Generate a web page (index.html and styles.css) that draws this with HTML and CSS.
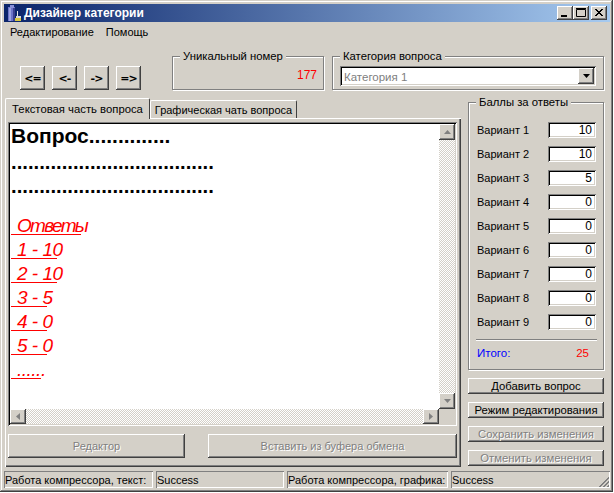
FILE: index.html
```html
<!DOCTYPE html>
<html lang="ru">
<head>
<meta charset="utf-8">
<title>Дизайнер категории</title>
<link rel="stylesheet" href="styles.css">
</head>
<body>
<div class="window">
  <div class="titlebar">
    <svg class="appicon" width="16" height="16" viewBox="0 0 16 16"><rect x="2" y="2" width="7" height="14" fill="#6c74c8"/><rect x="4" y="0" width="4" height="3" fill="#8890d8"/><rect x="3" y="3" width="2" height="13" fill="#9aa2e0"/><rect x="7" y="3" width="2" height="13" fill="#3a3f90"/><rect x="11" y="6" width="1" height="6" fill="#e8e8e8"/><rect x="10" y="11" width="5" height="2" fill="#d8d8d8"/><rect x="9" y="13" width="6" height="3" fill="#d8c840"/></svg>
    <span class="title-text">Дизайнер категории</span>
    <div class="winbtns">
      <div class="winbtn"><svg width="16" height="14" viewBox="0 0 16 14"><rect x="4" y="9" width="6" height="2" fill="#000"/></svg></div>
      <div class="winbtn"><svg width="16" height="14" viewBox="0 0 16 14"><path d="M3.500 3.500h9v7h-9z" fill="none" stroke="#000"/><path d="M3 2.500h10" stroke="#000"/></svg></div>
      <div class="winbtn winbtn-close"><svg width="16" height="14" viewBox="0 0 16 14"><path d="M4 3l7 7M5 3l7 7M11 3l-7 7M12 3l-7 7" stroke="#000" fill="none"/></svg></div>
    </div>
  </div>
  <div class="menu"><span>Редактирование</span><span>Помощь</span></div>
  <div class="top">
    <div class="nav">
      <div class="btn navbtn">&lt;=</div>
      <div class="btn navbtn">&lt;-</div>
      <div class="btn navbtn">-&gt;</div>
      <div class="btn navbtn">=&gt;</div>
    </div>
    <div class="group group-id">
      <div class="legend">Уникальный номер</div>
      <div class="id-value">177</div>
    </div>
    <div class="group group-cat">
      <div class="legend">Категория вопроса</div>
      <div class="combo">
        <span class="combo-text">Категория 1</span>
        <div class="btn combo-btn"><svg width="7" height="4" viewBox="0 0 7 4"><path d="M0 0h7L3.500 4z" fill="#000"/></svg></div>
      </div>
    </div>
  </div>
  <div class="main">
    <div class="left">
      <div class="tabs">
        <div class="tab tab-active">Текстовая часть вопроса</div>
        <div class="tab">Графическая чать вопроса</div>
      </div>
      <div class="panel">
        <div class="memo">
          <div class="memo-text">
            <div class="q-title">Вопрос..............</div>
            <div class="q-dots">....................................</div>
            <div class="q-dots">....................................</div>
            <div class="ans ans-first ans-w70">Ответы</div>
            <div class="ans ans-w46">1 - 10</div>
            <div class="ans ans-w46">2 - 10</div>
            <div class="ans ans-w36">3 - 5</div>
            <div class="ans ans-w36">4 - 0</div>
            <div class="ans ans-w36">5 - 0</div>
            <div class="ans ans-w30">......</div>
          </div>
          <div class="vscroll">
            <div class="sbtn"><svg width="7" height="4" viewBox="0 0 7 4"><path d="M3.500 0L7 4H0z" fill="#808080"/></svg></div>
            <div class="strack"></div>
            <div class="sbtn"><svg width="7" height="4" viewBox="0 0 7 4"><path d="M0 0h7L3.500 4z" fill="#808080"/></svg></div>
          </div>
          <div class="hscroll">
            <div class="sbtn"><svg width="4" height="7" viewBox="0 0 4 7"><path d="M4 0v7L0 3.500z" fill="#808080"/></svg></div>
            <div class="strack"></div>
            <div class="sbtn"><svg width="4" height="7" viewBox="0 0 4 7"><path d="M0 0v7L4 3.500z" fill="#808080"/></svg></div>
          </div>
          <div class="corner"></div>
        </div>
        <div class="memo-btns">
          <div class="btn disabled btn-editor">Редактор</div>
          <div class="btn disabled btn-paste">Вставить из буфера обмена</div>
        </div>
      </div>
    </div>
    <div class="right">
      <div class="group group-score">
        <div class="legend">Баллы за ответы</div>
        <div class="rows">
          <div class="row"><span>Вариант 1</span><div class="num">10</div></div>
          <div class="row"><span>Вариант 2</span><div class="num">10</div></div>
          <div class="row"><span>Вариант 3</span><div class="num">5</div></div>
          <div class="row"><span>Вариант 4</span><div class="num">0</div></div>
          <div class="row"><span>Вариант 5</span><div class="num">0</div></div>
          <div class="row"><span>Вариант 6</span><div class="num">0</div></div>
          <div class="row"><span>Вариант 7</span><div class="num">0</div></div>
          <div class="row"><span>Вариант 8</span><div class="num">0</div></div>
          <div class="row"><span>Вариант 9</span><div class="num">0</div></div>
        </div>
        <div class="sep"></div>
        <div class="total"><span class="total-label">Итого:</span><span class="total-value">25</span></div>
      </div>
      <div class="btn action">Добавить вопрос</div>
      <div class="btn action">Режим редактирования</div>
      <div class="btn action disabled">Сохранить изменения</div>
      <div class="btn action disabled">Отменить изменения</div>
    </div>
  </div>
  <div class="status">
    <div class="cell cell-1">Работа компрессора, текст:</div>
    <div class="cell cell-2">Success</div>
    <div class="cell cell-3">Работа компрессора, графика:</div>
    <div class="cell cell-4">Success<svg class="grip" width="12" height="12" viewBox="0 0 12 12"><path d="M11 1L1 11M11 5L5 11M11 9L9 11" stroke="#808080" fill="none"/><path d="M11 2L2 11M11 6L6 11M11 10L10 11" stroke="#808080" fill="none"/></svg></div>
  </div>
</div>
</body>
</html>
```

FILE: styles.css
```css
* { box-sizing: border-box; }
html, body { margin: 0; padding: 0; }
body {
  width: 614px;
  height: 493px;
  background: #fff;
  font-family: "Liberation Sans", Arial, sans-serif;
  font-size: 11px;
  color: #000;
  overflow: hidden;
}
.window {
  width: 613px;
  height: 492px;
  padding: 4px 3px 4px 4px;
  display: flex;
  flex-direction: column;
  background: #d4d0c8;
  box-shadow: inset -1px -1px #404040, inset 1px 1px #d4d0c8, inset -2px -2px #808080, inset 2px 2px #fff;
}
.titlebar {
  height: 18px;
  flex: none;
  display: flex;
  align-items: center;
  background: linear-gradient(90deg, #0a246a, #a6caf0);
  padding: 0 3px 0 2px;
  color: #fff;
}
.appicon { flex: none; margin-right: 2px; }
.title-text { font-weight: bold; font-size: 12px; }
.winbtns { margin-left: auto; display: flex; }
.winbtn {
  width: 16px;
  height: 14px;
  display: flex;
  background: #d4d0c8;
  box-shadow: inset -1px -1px #404040, inset 1px 1px #fff, inset -2px -2px #808080;
}
.winbtn-close { margin-left: 2px; }
.menu {
  height: 20px;
  flex: none;
  display: flex;
  align-items: center;
  gap: 12px;
  padding-left: 6px;
}
.top { height: 56px; flex: none; display: flex; }
.nav { display: flex; gap: 7px; margin: 24px 0 0 16px; height: 24px; }
.btn {
  display: flex;
  align-items: center;
  justify-content: center;
  background: #d4d0c8;
  box-shadow: inset -1px -1px #404040, inset 1px 1px #fff, inset -2px -2px #808080;
}
.navbtn { width: 25px; height: 24px; font-family: "DejaVu Sans", sans-serif; font-weight: bold; font-size: 11px; letter-spacing: -1px; }
.group {
  border: 1px solid #808080;
  box-shadow: inset 1px 1px #fff, 1px 1px #fff;
}
.legend {
  width: fit-content;
  height: 13px;
  line-height: 13px;
  margin: -7px 0 0 7px;
  padding: 0 3px;
  background: #d4d0c8;
  font-size: 11.300px;
}
.group-id { width: 152px; height: 34px; margin: 14px 0 0 31px; }
.id-value { text-align: right; color: #f00; padding-right: 6px; margin-top: 5px; font-size: 12px; }
.group-cat { width: 272px; height: 34px; margin: 14px 0 0 8px; }
.combo {
  height: 20px;
  margin: 3px 7px 0;
  display: flex;
  align-items: center;
  background: #fff;
  padding: 2px;
  box-shadow: inset 1px 1px #808080, inset -1px -1px #fff, inset 2px 2px #000, inset -2px -2px #d4d0c8;
}
.combo-text { flex: 1; color: #808080; padding-left: 2px; font-size: 11.500px; margin-top: 1px; }
.combo-btn { width: 16px; height: 16px; }
.main { flex: 1; min-height: 0; display: flex; }
.left { width: 456px; margin-left: 1px; display: flex; flex-direction: column; }
.tabs { height: 20px; flex: none; display: flex; align-items: flex-end; position: relative; z-index: 1; }
.tab {
  height: 18px;
  padding: 0 3px;
  line-height: 18px;
  background: #d4d0c8;
  border-left: 1px solid #fff;
  border-top: 1px solid #fff;
  border-right: 1px solid #404040;
  border-radius: 2px 2px 0 0;
  width: 147px;
  white-space: nowrap;
  text-align: center;
}
.tab-active {
  height: 21px;
  width: 145px;
  margin-bottom: -1px;
  line-height: 20px;
  font-size: 11.300px;
}
.panel {
  flex: 1;
  min-height: 0;
  padding: 4px 3px 0;
  display: flex;
  flex-direction: column;
  box-shadow: inset 1px 1px #fff, inset -1px -1px #404040, inset -2px -2px #808080;
}
.memo {
  width: 449px;
  height: 304px;
  flex: none;
  padding: 2px;
  display: grid;
  grid-template-columns: 429px 16px;
  grid-template-rows: 285px 15px;
  background: #fff;
  box-shadow: inset 1px 1px #808080, inset -1px -1px #fff, inset 2px 2px #000, inset -2px -2px #d4d0c8;
}
.memo-text { overflow: hidden; background: #fff; padding-left: 1px; }
.q-title { font-weight: bold; font-size: 21px; line-height: 24px; white-space: nowrap; margin-bottom: 2px; }
.q-dots { font-weight: bold; font-size: 20.300px; line-height: 24px; white-space: nowrap; }
.ans {
  height: 24px;
  padding: 6px 0 0 6px;
  line-height: 18px;
  border-bottom: 1px solid #f00;
  color: #f00;
  font-style: italic;
  font-size: 19px;
  letter-spacing: -0.500px;
  white-space: nowrap;
}
.ans-first { margin-top: 13px; letter-spacing: -1.700px; }
.ans-w70 { width: 70px; }
.ans-w46 { width: 46px; }
.ans-w36 { width: 36px; }
.ans-w30 { width: 30px; }
.vscroll { display: flex; flex-direction: column; }
.hscroll { display: flex; }
.strack {
  flex: 1;
  background: repeating-conic-gradient(#fff 0 25%, #d4d0c8 0 50%) 0 0 / 2px 2px;
}
.sbtn {
  width: 16px;
  height: 16px;
  flex: none;
  display: flex;
  align-items: center;
  justify-content: center;
  background: #d4d0c8;
  box-shadow: inset -1px -1px #404040, inset 1px 1px #fff, inset -2px -2px #808080;
}
.hscroll .sbtn { height: 15px; }
.corner { background: #d4d0c8; }
.memo-btns { display: flex; margin-top: 8px; gap: 23px; }
.disabled { color: #808080; text-shadow: 1px 1px #fff; }
.btn-editor { width: 177px; height: 24px; }
.btn-paste { width: 249px; height: 24px; }
.right { width: 136px; margin: 4px 0 0 7px; display: flex; flex-direction: column; gap: 8px; }
.group-score { height: 268px; }
.rows { margin: 13px 7px 0 8px; display: flex; flex-direction: column; gap: 8px; }
.row { height: 16px; display: flex; justify-content: space-between; align-items: center; }
.num {
  width: 48px;
  height: 16px;
  background: #fff;
  text-align: right;
  font-size: 12px;
  line-height: 17px;
  padding-right: 4px;
  box-shadow: inset 1px 1px #808080, inset -1px -1px #fff, inset 2px 2px #000, inset -2px -2px #d4d0c8;
}
.sep { height: 2px; margin: 9px 6px 0 7px; background: #fff; border-top: 1px solid #808080; }
.total { display: flex; justify-content: space-between; margin: 6px 14px 0 8px; font-size: 11.500px; }
.total-label { color: #00f; }
.total-value { color: #f00; }
.action { height: 16px; white-space: nowrap; font-size: 11.300px; }
.status { height: 17px; flex: none; margin-top: 4px; display: flex; gap: 3px; }
.cell {
  height: 17px;
  padding-left: 1px;
  white-space: nowrap;
  display: flex;
  align-items: center;
  box-shadow: inset 1px 1px #808080, inset -1px -1px #fff;
}
.cell-1 { width: 149px; }
.cell-2 { width: 128px; }
.cell-3 { width: 161px; }
.cell-4 { width: 159px; justify-content: space-between; }
.grip { align-self: flex-end; }
```
